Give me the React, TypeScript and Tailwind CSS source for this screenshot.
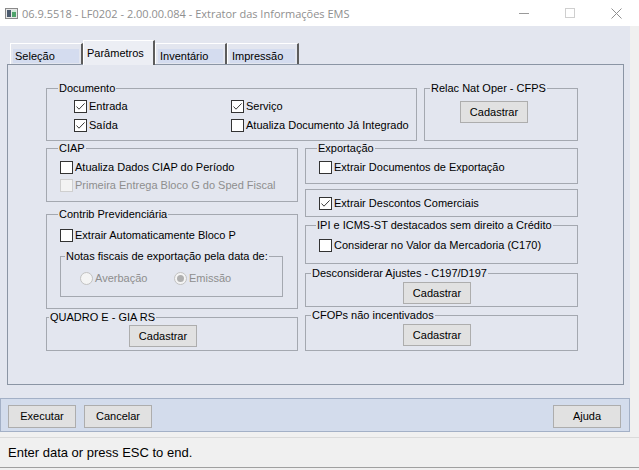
import type { ReactNode } from "react";

function Box({ checked, disabled }: { checked?: boolean; disabled?: boolean }) {
  return (
    <span
      className={
        disabled
          ? "flex h-[13px] w-[13px] shrink-0 items-center justify-center border border-[#cfcfcf] bg-[#f3f3f3]"
          : "flex h-[13px] w-[13px] shrink-0 items-center justify-center border border-[#333333] bg-white"
      }
    >
      {checked && (
        <svg width="11" height="11" viewBox="0 0 11 11">
          <path d="M1.5 5.5 L4 8.2 L9.6 2.4" fill="none" stroke="#3a3a3a" strokeWidth="1" />
        </svg>
      )}
    </span>
  );
}

function Check({
  label,
  checked,
  disabled,
  className = "h-[19px]",
}: {
  label: string;
  checked?: boolean;
  disabled?: boolean;
  className?: string;
}) {
  return (
    <div className={`flex items-center gap-[2px] ${className}`}>
      <Box checked={checked} disabled={disabled} />
      <span className={disabled ? "whitespace-nowrap text-[#8e8e8e]" : "whitespace-nowrap"}>{label}</span>
    </div>
  );
}

function Radio({ label, selected }: { label: string; selected?: boolean }) {
  return (
    <div className="flex h-[19px] items-center gap-[2px]">
      <span className="flex h-[13px] w-[13px] items-center justify-center rounded-full border border-[#c2c2c2] bg-[#f4f4f4]">
        {selected && <span className="h-[7px] w-[7px] rounded-full bg-[#b0b0b0]" />}
      </span>
      <span className="text-[#8e8e8e]">{label}</span>
    </div>
  );
}

function Group({
  label,
  legendClass = "",
  className,
  children,
}: {
  label?: string;
  legendClass?: string;
  className: string;
  children: ReactNode;
}) {
  return (
    <fieldset className={`min-w-0 border border-[#a4a8b0] ${className}`}>
      {label && <legend className={`px-[1px] leading-[13px] whitespace-nowrap ${legendClass}`}>{label}</legend>}
      {children}
    </fieldset>
  );
}

function Cadastrar() {
  return (
    <button className="h-[22px] w-[68px] border border-[#adadad] bg-[#e1e1e1] leading-none">Cadastrar</button>
  );
}

function Tab({ label, active, wide }: { label: string; active?: boolean; wide?: boolean }) {
  if (active) {
    return (
      <div className="relative z-10 -mb-px h-[25px] w-[72px] border-t border-l border-white border-r-2 border-r-[#5c5c5c] bg-[#eceef4] pt-[5px] pl-[3px] leading-[14px]">
        {label}
      </div>
    );
  }
  return (
    <div
      className={`h-[21px] ${wide ? "w-[73px]" : "w-[72px]"} border-t border-l border-white border-r-2 border-r-[#5c5c5c] px-[2px] pt-[5px]`}
    >
      <div className="h-[14px] bg-[#d4dcef] pl-[2px] leading-[14px]">{label}</div>
    </div>
  );
}

function WinButton({ children }: { children: ReactNode }) {
  return <div className="flex h-[26px] w-[46px] items-center justify-center">{children}</div>;
}

export default function App() {
  return (
    <div className="h-[470px] w-[639px] overflow-hidden bg-[#f0f0f0] font-['Liberation_Sans',Arial,sans-serif] text-[11px] leading-[13px] text-black">
      {/* title bar */}
      <div className="flex h-[26px] items-center bg-white">
        <svg className="ml-[5px]" width="13" height="11" viewBox="0 0 13 11">
          <rect x="0.5" y="0.5" width="12" height="10" fill="#e8e8e8" stroke="#8a8a8a" />
          <rect x="2" y="2" width="4" height="7" fill="#4b5a6e" />
          <rect x="7" y="2" width="4" height="7" fill="#4fa36a" />
          <rect x="7" y="2" width="4" height="2" fill="#cfe8d6" />
        </svg>
        <span className="ml-[4px] font-['Open_Sans','Noto_Sans',sans-serif] text-[11px] text-[#8f8f8f]">
          06.9.5518 - LF0202 - 2.00.00.084 - Extrator das Informações EMS
        </span>
        <div className="ml-auto flex">
          <WinButton>
            <span className="block h-px w-[10px] bg-[#9a9a9a]" />
          </WinButton>
          <WinButton>
            <span className="block h-[10px] w-[10px] border border-[#cfcfcf]" />
          </WinButton>
          <WinButton>
            <svg width="11" height="11" viewBox="0 0 11 11">
              <path d="M0.5 0.5 L10.5 10.5 M10.5 0.5 L0.5 10.5" stroke="#8f8f8f" strokeWidth="1" />
            </svg>
          </WinButton>
        </div>
      </div>

      {/* body */}
      <div className="flex w-[630px] flex-col bg-[#e3e6ef] pt-[14px]">
        <div className="ml-[10px] flex h-[24px] items-end">
          <Tab label="Seleção" wide />
          <Tab label="Parâmetros" active />
          <Tab label="Inventário" />
          <Tab label="Impressão" />
        </div>

        <div className="ml-[7px] h-[321px] w-[617px] border border-[#8b95a4] pt-[17px] pl-[38px]">
          <div className="flex gap-[7px]">
            <Group label="Documento" legendClass="ml-[11px]" className="h-[59px] w-[371px]">
              <div className="mt-[2px] grid grid-cols-[157px_auto] pl-[27px]">
                <Check label="Entrada" checked />
                <Check label="Serviço" checked />
                <Check label="Saída" checked />
                <Check label="Atualiza Documento Já Integrado" />
              </div>
            </Group>
            <Group label="Relac Nat Oper - CFPS" legendClass="ml-[5px]" className="h-[59px] w-[154px]">
              <div className="mt-[6px] pl-[35px]">
                <Cadastrar />
              </div>
            </Group>
          </div>

          <div className="mt-px flex gap-[7px]">
            <div className="flex w-[252px] flex-col">
              <Group label="CIAP" legendClass="ml-[11px]" className="h-[60px] w-[252px]">
                <div className="mt-[3px] pl-[13px]">
                  <Check label="Atualiza Dados CIAP do Período" className="h-[18px]" />
                  <Check label="Primeira Entrega Bloco G do Sped Fiscal" disabled className="h-[18px]" />
                </div>
              </Group>
              <Group label="Contrib Previdenciária" legendClass="ml-[11px]" className="mt-[6px] h-[101px] w-[252px]">
                <div className="mt-[5px] pl-[13px]">
                  <Check label="Extrair Automaticamente Bloco P" className="h-[18px]" />
                  <Group
                    label="Notas fiscais de exportação pela data de:"
                    legendClass="ml-[4px]"
                    className="mt-[6px] h-[47px] w-[223px]"
                  >
                    <div className="mt-[6px] flex pl-[19px]">
                      <div className="w-[94px]">
                        <Radio label="Averbação" />
                      </div>
                      <Radio label="Emissão" selected />
                    </div>
                  </Group>
                </div>
              </Group>
              <Group label="QUADRO E - GIA RS" legendClass="ml-[2px]" className="mt-[2px] h-[40px] w-[252px]">
                <div className="mt-px pl-[82px]">
                  <Cadastrar />
                </div>
              </Group>
            </div>

            <div className="flex w-[273px] flex-col">
              <Group label="Exportação" legendClass="ml-[11px]" className="h-[42px] w-[273px]">
                <div className="mt-[3px] pl-[13px]">
                  <Check label="Extrair Documentos de Exportação" className="h-[18px]" />
                </div>
              </Group>
              <Group className="mt-[5px] h-[28px] w-[273px]">
                <div className="pt-[4px] pl-[13px]">
                  <Check label="Extrair Descontos Comerciais" checked className="h-[18px]" />
                </div>
              </Group>
              <Group
                label="IPI e ICMS-ST destacados sem direito a Crédito"
                legendClass="ml-[10px]"
                className="mt-[2px] h-[45px] w-[273px]"
              >
                <div className="mt-[4px] pl-[13px]">
                  <Check label="Considerar no Valor da Mercadoria (C170)" className="h-[18px]" />
                </div>
              </Group>
              <Group label="Desconsiderar Ajustes - C197/D197" legendClass="ml-[5px]" className="mt-[3px] h-[40px] w-[273px]">
                <div className="mt-[2px] pl-[97px]">
                  <Cadastrar />
                </div>
              </Group>
              <Group label="CFOPs não incentivados" legendClass="ml-[5px]" className="mt-[2px] h-[42px] w-[273px]">
                <div className="mt-[2px] pl-[97px]">
                  <Cadastrar />
                </div>
              </Group>
            </div>
          </div>
        </div>

        {/* button bar */}
        <div className="mt-[13px] flex h-[34px] items-start border border-[#a3b0c6] bg-[#d3dcec] pt-[6px] pl-[7px] pr-[8px]">
          <button className="h-[23px] w-[68px] border border-[#adadad] bg-[#e1e1e1] leading-none">Executar</button>
          <button className="ml-[8px] h-[23px] w-[68px] border border-[#adadad] bg-[#e1e1e1] leading-none">
            Cancelar
          </button>
          <button className="ml-auto h-[23px] w-[68px] border border-[#adadad] bg-[#e1e1e1] leading-none">Ajuda</button>
        </div>
      </div>

      {/* status bar */}
      <div className="mt-[5px] flex h-[31px] items-center border-y border-t-[#dadada] border-b-[#a0a0a0] pl-[8px] text-[13px]">
        Enter data or press ESC to end.
      </div>
    </div>
  );
}
